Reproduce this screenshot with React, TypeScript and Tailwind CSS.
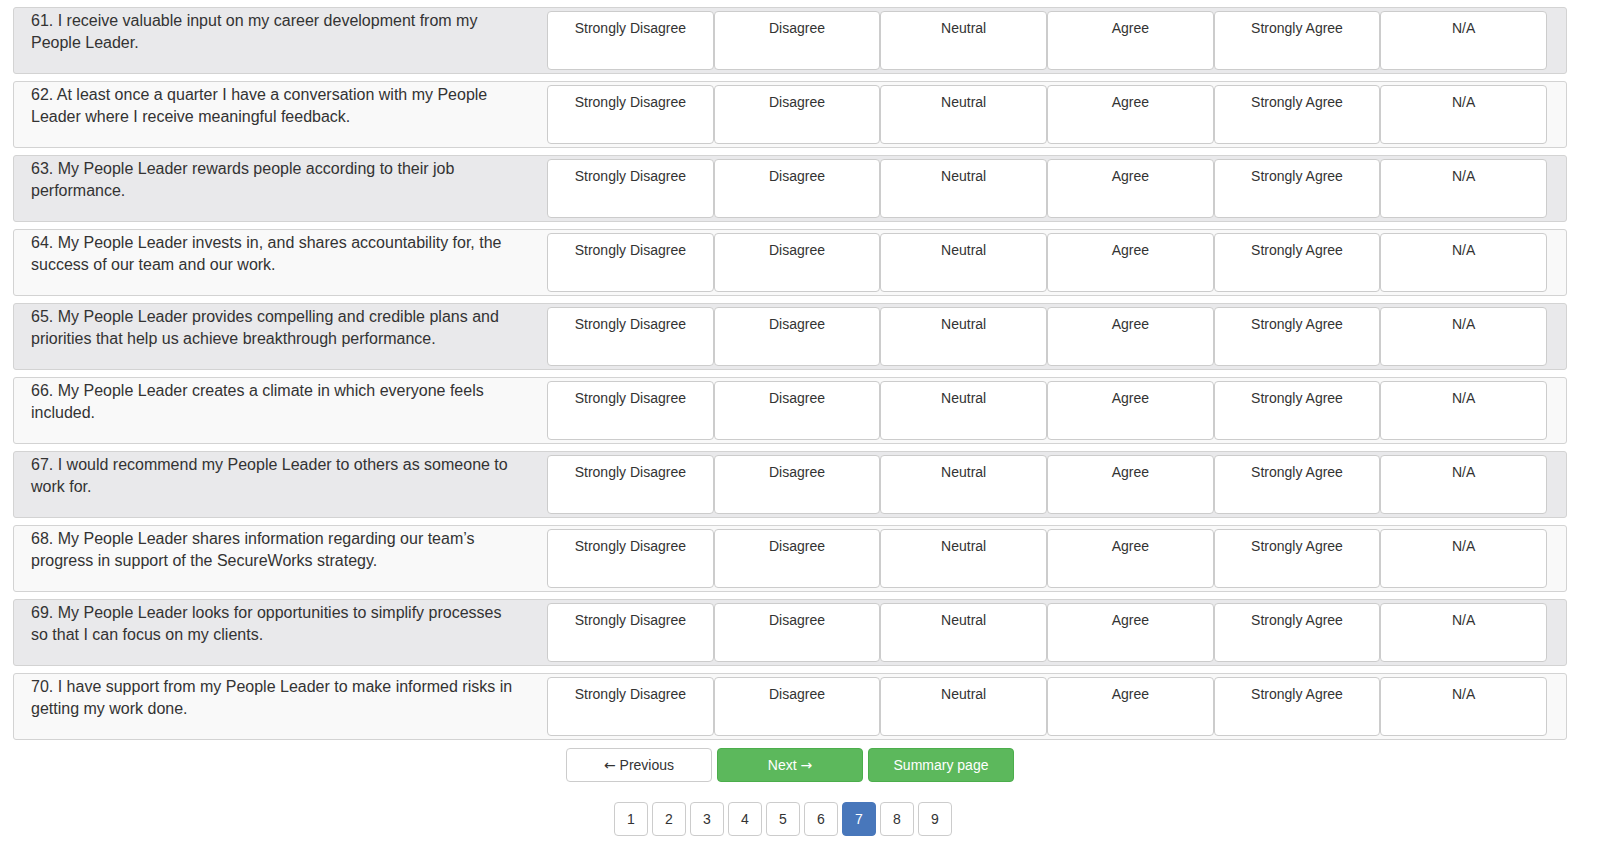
import React from 'react';

const questions = [
  '61. I receive valuable input on my career development from my People Leader.',
  '62. At least once a quarter I have a conversation with my People Leader where I receive meaningful feedback.',
  '63. My People Leader rewards people according to their job performance.',
  '64. My People Leader invests in, and shares accountability for, the success of our team and our work.',
  '65. My People Leader provides compelling and credible plans and priorities that help us achieve breakthrough performance.',
  '66. My People Leader creates a climate in which everyone feels included.',
  '67. I would recommend my People Leader to others as someone to work for.',
  '68. My People Leader shares information regarding our team\u2019s progress in support of the SecureWorks strategy.',
  '69. My People Leader looks for opportunities to simplify processes so that I can focus on my clients.',
  '70. I have support from my People Leader to make informed risks in getting my work done.',
];

const options = ['Strongly Disagree', 'Disagree', 'Neutral', 'Agree', 'Strongly Agree', 'N/A'];

const pages = [1, 2, 3, 4, 5, 6, 7, 8, 9];

const App: React.FC = () => {
  return (
    <div className="min-h-screen bg-white text-[#333] font-['Liberation_Sans',Arial,sans-serif]">
      <div className="ml-[13px] w-[1554px] pt-[7px]">
        {/* Question rows */}
        {questions.map((q, i) => (
          <div
            key={q}
            className={`flex h-[67px] mb-[7px] rounded-[3px] border border-[#d3d3d3] ${
              i % 2 === 0 ? 'bg-[#e9e9eb]' : 'bg-[#f9f9f9]'
            }`}
          >
            <div className="w-[533px] shrink-0 pl-[17px] pt-[2px]">
              <p className="w-[490px] text-[16px] leading-[22px]">{q}</p>
            </div>
            <div className="grid grid-cols-6 w-[1000px] h-[59px] mt-[3px]">
              {options.map((o) => (
                <div
                  key={o}
                  className="rounded-[4px] border border-[#cccccc] bg-white pt-[6px] text-center text-[14px] leading-[20px]"
                >
                  {o}
                </div>
              ))}
            </div>
          </div>
        ))}

        {/* Navigation buttons */}
        <div className="flex justify-center gap-[5px] pt-[1px]">
          <button className="w-[146px] h-[34px] rounded-[4px] border border-[#cccccc] bg-white text-[14px] text-[#333]">
            <span className="font-['DejaVu_Sans',sans-serif]">&larr;</span> Previous
          </button>
          <button className="w-[146px] h-[34px] rounded-[4px] border border-[#4cae4c] bg-[#5cb85c] text-[14px] text-white">
            Next <span className="font-['DejaVu_Sans',sans-serif]">&rarr;</span>
          </button>
          <button className="w-[146px] h-[34px] rounded-[4px] border border-[#4cae4c] bg-[#5cb85c] text-[14px] text-white">
            Summary page
          </button>
        </div>

        {/* Pagination */}
        <div className="flex justify-center gap-[4px] pt-[20px] pr-[14px]">
          {pages.map((p) => (
            <div
              key={p}
              className={`flex h-[34px] w-[34px] items-center justify-center rounded-[4px] border text-[14px] ${
                p === 7
                  ? 'border-[#4877bb] bg-[#4877bb] text-white'
                  : 'border-[#cccccc] bg-white text-[#333]'
              }`}
            >
              {p}
            </div>
          ))}
        </div>
      </div>
    </div>
  );
};

export default App;
